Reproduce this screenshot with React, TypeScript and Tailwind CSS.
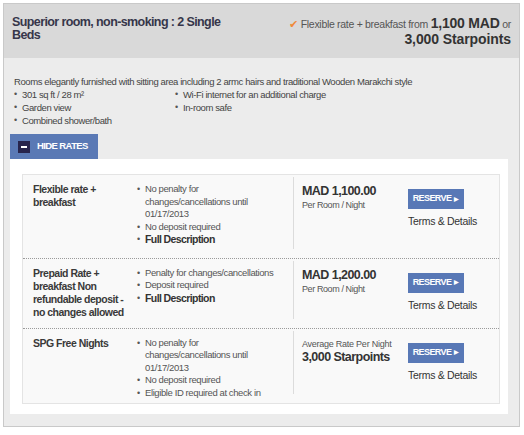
import React from 'react';

type Rate = {
  name: string;
  bullets: { text: string; bold?: boolean }[];
  priceTop?: string;
  price: string;
  priceSub?: string;
};

const rates: Rate[] = [
  {
    name: 'Flexible rate + breakfast',
    bullets: [
      { text: 'No penalty for changes/cancellations until 01/17/2013' },
      { text: 'No deposit required' },
      { text: 'Full Description', bold: true },
    ],
    price: 'MAD 1,100.00',
    priceSub: 'Per Room / Night',
  },
  {
    name: 'Prepaid Rate + breakfast Non refundable deposit - no changes allowed',
    bullets: [
      { text: 'Penalty for changes/cancellations' },
      { text: 'Deposit required' },
      { text: 'Full Description', bold: true },
    ],
    price: 'MAD 1,200.00',
    priceSub: 'Per Room / Night',
  },
  {
    name: 'SPG Free Nights',
    bullets: [
      { text: 'No penalty for changes/cancellations until 01/17/2013' },
      { text: 'No deposit required' },
      { text: 'Eligible ID required at check in' },
    ],
    priceTop: 'Average Rate Per Night',
    price: '3,000 Starpoints',
  },
];

function Bullet({ children, bold }: { children: React.ReactNode; bold?: boolean }) {
  return (
    <li className="flex">
      <span className="w-[8px] shrink-0 text-[9px] tracking-normal text-[#555]">•</span>
      <span className={bold ? 'text-[10.5px] font-bold tracking-[-0.6px] text-[#333]' : ''}>{children}</span>
    </li>
  );
}

function RateRow({ rate, last }: { rate: Rate; last: boolean }) {
  return (
    <div className={`flex pl-[10px] ${last ? '' : 'border-b border-dotted border-[#9a9a9a]'}`}>
      <div className="w-[104px] shrink-0 pt-[8px] pr-[8px] pb-[9px] text-[10.5px] leading-[13px] font-bold tracking-[-0.5px] text-[#3a3a3a]">
        {rate.name}
      </div>
      <ul
        className={`w-[156px] shrink-0 pt-[8px] pr-[12px] text-[9.5px] leading-[12.5px] tracking-[-0.4px] text-[#555] ${
          last ? 'pb-[4px]' : 'pb-[12px]'
        }`}
      >
        {rate.bullets.map((b, i) => (
          <Bullet key={i} bold={b.bold}>
            {b.text}
          </Bullet>
        ))}
      </ul>
      <div className="mt-[2px] mb-[9px] w-[115px] shrink-0 border-l border-[#dcdcdc] pl-[8px] pt-[7px]">
        {rate.priceTop && (
          <div className="text-[9px] leading-[12px] tracking-[-0.25px] text-[#555]">{rate.priceTop}</div>
        )}
        <div className="text-[12.5px] leading-[15px] font-bold tracking-[-0.55px] text-[#333]">{rate.price}</div>
        {rate.priceSub && (
          <div className="text-[9px] leading-[12px] tracking-[-0.4px] text-[#555]">{rate.priceSub}</div>
        )}
      </div>
      <div className="pt-[14px]">
        <button className="flex h-[20px] w-[56px] items-center justify-center gap-[3px] bg-[#5878b6] text-[9px] font-bold tracking-[-0.6px] text-white">
          RESERVE
          <span className="text-[6px] tracking-normal">▶</span>
        </button>
        <div className="mt-[6px] text-[10.5px] leading-[13px] tracking-[-0.3px] text-[#333]">Terms &amp; Details</div>
      </div>
    </div>
  );
}

export default function App() {
  return (
    <div
      className="h-[435px] w-[524px] bg-white p-[3px] text-[#444]"
      style={{ fontFamily: '"Liberation Sans", Arial, sans-serif' }}
    >
      <div className="h-[424px] w-[517px] border border-[#c9c9c9] bg-[#ececec]">
        <div className="flex h-[54px] justify-between bg-[#d9d9d9] pl-[8px] pr-[8px] pt-[12px]">
          <h1 className="w-[225px] text-[12.5px] leading-[13px] font-bold tracking-[-0.6px] text-[#36364a]">
            Superior room, non-smoking : 2 Single Beds
          </h1>
          <div className="text-right text-[10.5px] leading-[15px] tracking-[-0.3px] text-[#555]">
            <div>
              <span className="text-[#f08a3a]">✔</span> Flexible rate + breakfast from{' '}
              <span className="text-[14px] font-bold tracking-[-0.2px] text-[#333]">1,100 MAD</span> or
            </div>
            <div className="text-[14px] font-bold tracking-[-0.1px] text-[#333]">3,000 Starpoints</div>
          </div>
        </div>

        <div className="pl-[6px] pt-[17px]">
          <p className="pl-[4px] text-[9.5px] leading-[13px] tracking-[-0.4px] text-[#444]">
            Rooms elegantly furnished with sitting area including 2 armc hairs and traditional Wooden Marakchi style
          </p>
          <div className="grid grid-cols-[161px_1fr] pl-[4px] text-[9.5px] leading-[13px] tracking-[-0.4px] text-[#444]">
            <ul>
              <Bullet>301 sq ft / 28 m²</Bullet>
              <Bullet>Garden view</Bullet>
              <Bullet>Combined shower/bath</Bullet>
            </ul>
            <ul>
              <Bullet>Wi-Fi internet for an additional charge</Bullet>
              <Bullet>In-room safe</Bullet>
            </ul>
          </div>

          <div className="mt-[7px] flex h-[25px] w-[88px] items-center gap-[7px] bg-[#5a79b5] pl-[8px]">
            <span className="flex h-[12px] w-[12px] items-center justify-center bg-[#27244c]">
              <span className="h-[2px] w-[6px] bg-white" />
            </span>
            <span className="text-[9.5px] font-bold tracking-[-0.6px] text-white">HIDE RATES</span>
          </div>

          <div className="w-[498px] bg-white pt-[15px] pb-[10px] pl-[12px] pr-[8px]">
            <div className="border border-[#e4e4e4] bg-[#f9f9f9]">
              {rates.map((r, i) => (
                <RateRow key={i} rate={r} last={i === rates.length - 1} />
              ))}
            </div>
          </div>
        </div>
      </div>
    </div>
  );
}
